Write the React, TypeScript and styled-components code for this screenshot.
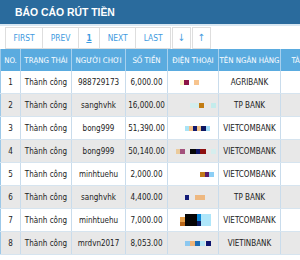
import React from "react"
import styled, { createGlobalStyle } from "styled-components"

const GlobalStyle = createGlobalStyle`
  html, body {
    margin: 0;
    padding: 0;
    background: #ffffff;
  }
  body {
    font-family: "DejaVu Sans Condensed", "DejaVu Sans", sans-serif;
    font-stretch: condensed;
  }
`

type Block = { x: number; y?: number; w: number; h?: number; c: string }

type Row = {
  status: string
  player: string
  amount: string
  phone: Block[]
  bank: string
}

const rows: Row[] = [
  {
    status: "Thành công",
    player: "988729173",
    amount: "6,000.00",
    bank: "AGRIBANK",
    phone: [
      { x: 12, w: 4, c: "#fbf5c8" },
      { x: 16, w: 5, c: "#8c1446" },
      { x: 26, w: 5, c: "#f7c48e" },
    ],
  },
  {
    status: "Thành công",
    player: "sanghvhk",
    amount: "16,000.00",
    bank: "TP BANK",
    phone: [
      { x: 22, w: 9, c: "#d3eeee" },
      { x: 31, w: 5, c: "#c27c12" },
      { x: 43, w: 5, c: "#c4ecec" },
    ],
  },
  {
    status: "Thành công",
    player: "bong999",
    amount: "51,390.00",
    bank: "VIETCOMBANK",
    phone: [
      { x: 17, w: 4, c: "#a9e4f6" },
      { x: 21, w: 4, c: "#f3c189" },
      { x: 25, w: 4, c: "#10186e" },
      { x: 29, w: 4, c: "#eec08a" },
      { x: 33, w: 5, c: "#0c1460" },
      { x: 38, w: 4, c: "#9fdcf8" },
    ],
  },
  {
    status: "Thành công",
    player: "bong999",
    amount: "50,140.00",
    bank: "VIETCOMBANK",
    phone: [
      { x: 8, w: 4, c: "#ebcb9c" },
      { x: 12, w: 5, c: "#a3517c" },
      { x: 22, w: 6, c: "#080808" },
      { x: 28, w: 4, c: "#0e1466" },
      { x: 32, w: 6, c: "#8e1010" },
      { x: 43, w: 5, c: "#d6eeee" },
    ],
  },
  {
    status: "Thành công",
    player: "minhtuehu",
    amount: "2,000.00",
    bank: "VIETCOMBANK",
    phone: [
      { x: 32, w: 5, c: "#c27c1c" },
      { x: 37, w: 4, c: "#5a1c6c" },
      { x: 41, w: 5, c: "#8ccff6" },
    ],
  },
  {
    status: "Thành công",
    player: "sanghvhk",
    amount: "4,400.00",
    bank: "TP BANK",
    phone: [
      { x: 17, w: 4, c: "#141c78" },
      { x: 27, w: 10, c: "#eeb880" },
    ],
  },
  {
    status: "Thành công",
    player: "minhtuehu",
    amount: "7,000.00",
    bank: "VIETCOMBANK",
    phone: [
      { x: 12, y: -1, w: 5, h: 5, c: "#e8a24c" },
      { x: 12, y: 4, w: 5, h: 5, c: "#b8661a" },
      { x: 17, y: -4, w: 12, h: 12, c: "#050505" },
      { x: 29, y: -4, w: 4, h: 7, c: "#0c8ad8" },
      { x: 29, y: 3, w: 4, h: 5, c: "#0c1c64" },
      { x: 33, y: -4, w: 10, h: 12, c: "#aee6fa" },
    ],
  },
  {
    status: "Thành công",
    player: "mrdvn2017",
    amount: "8,053.00",
    bank: "VIETINBANK",
    phone: [
      { x: 17, w: 5, c: "#8cc8f0" },
      { x: 22, w: 5, c: "#eeb478" },
      { x: 27, w: 5, c: "#1c6cb4" },
      { x: 32, w: 5, c: "#b4e4f4" },
      { x: 38, w: 5, c: "#0c1470" },
    ],
  },
]

const columns = [
  { label: "NO.", width: 20 },
  { label: "TRẠNG THÁI", width: 51 },
  { label: "NGƯỜI CHƠI", width: 54 },
  { label: "SỐ TIỀN", width: 42 },
  { label: "ĐIỆN THOẠI", width: 51 },
  { label: "TÊN NGÂN HÀNG", width: 62 },
  { label: "TÀI KHOẢN", width: 60 },
]

export default function App() {
  return (
    <>
      <GlobalStyle />
      <Page>
        <TitleBar>BÁO CÁO RÚT TIỀN</TitleBar>
        <Pager>
          <PageButton>FIRST</PageButton>
          <PageButton>PREV</PageButton>
          <PageButton $current>1</PageButton>
          <PageButton>NEXT</PageButton>
          <PageButton>LAST</PageButton>
          <ArrowButton>↓</ArrowButton>
          <ArrowButton>↑</ArrowButton>
        </Pager>
        <Table>
          <colgroup>
            {columns.map((col) => (
              <col key={col.label} style={{ width: col.width }} />
            ))}
          </colgroup>
          <thead>
            <tr>
              {columns.map((col) => (
                <HeadCell key={col.label}>{col.label}</HeadCell>
              ))}
            </tr>
          </thead>
          <tbody>
            {rows.map((row, i) => (
              <BodyRow key={i} $alt={i % 2 === 1}>
                <Cell>{i + 1}</Cell>
                <Cell>{row.status}</Cell>
                <Cell>{row.player}</Cell>
                <Cell>{row.amount}</Cell>
                <Cell>
                  <PhoneMask width="50" height="12" viewBox="0 -4 50 12">
                    {row.phone.map((b, j) => (
                      <rect key={j} x={b.x} y={b.y ?? 0} width={b.w} height={b.h ?? 5} fill={b.c} />
                    ))}
                  </PhoneMask>
                </Cell>
                <Cell>{row.bank}</Cell>
                <Cell />
              </BodyRow>
            ))}
          </tbody>
        </Table>
      </Page>
    </>
  )
}

const Page = styled.div`
  width: 300px;
  height: 260px;
  overflow: hidden;
  background: #ffffff;
`

const TitleBar = styled.div`
  height: 24px;
  line-height: 25px;
  padding-left: 15px;
  background: #2a6b9d;
  color: #ffffff;
  font-family: "Liberation Sans", Arial, sans-serif;
  font-size: 10.4px;
  font-weight: 700;
  border-bottom: 2px solid #d8e7f2;
  box-sizing: content-box;
`

const Pager = styled.div`
  display: flex;
  align-items: center;
  height: 23px;
  padding: 0 5px;
`

const PageButton = styled.div<{ $current?: boolean }>`
  height: 20px;
  line-height: 20px;
  padding: 0 7.5px;
  border: 1px solid #dedede;
  margin-left: -1px;
  color: #3f9be0;
  font-size: 8.4px;
  text-decoration: ${(p) => (p.$current ? "underline" : "none")};
  font-weight: ${(p) => (p.$current ? 700 : 400)};
  &:first-child {
    margin-left: 0;
  }
`

const ArrowButton = styled(PageButton)`
  width: 17px;
  padding: 0;
  margin-left: 1px;
  text-align: center;
  font-size: 10px;
`

const Table = styled.table`
  border-collapse: collapse;
  table-layout: fixed;
  width: 340px;
  border-left: 1px solid #9cc8e8;
`

const HeadCell = styled.th`
  height: 22px;
  padding: 0;
  background: #5aabdf;
  color: #ffffff;
  font-size: 7.8px;
  font-weight: 400;
  text-align: center;
  white-space: nowrap;
  overflow: hidden;
  border-right: 1px solid #a7d0ee;
`

const BodyRow = styled.tr<{ $alt: boolean }>`
  background: ${(p) => (p.$alt ? "#e8e8e8" : "#ffffff")};
`

const Cell = styled.td`
  height: 22px;
  padding: 0;
  font-size: 8px;
  color: #222222;
  text-align: center;
  white-space: nowrap;
  overflow: hidden;
  border-right: 1px solid #c9dcec;
  border-bottom: 1px solid #d6e4ef;
`

const PhoneMask = styled.svg`
  display: block;
  margin: 0 auto;
`
